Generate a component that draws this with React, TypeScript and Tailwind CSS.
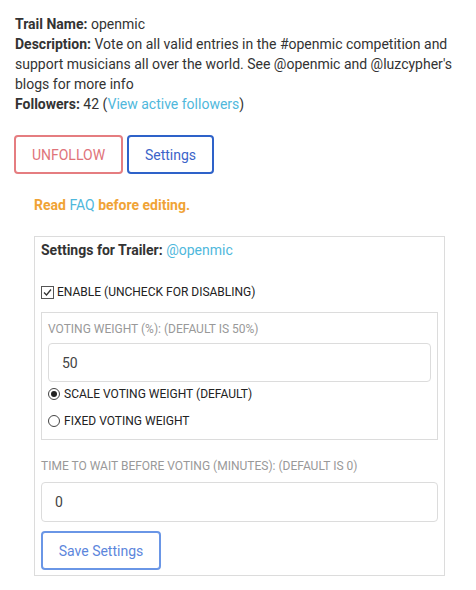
export default function App() {
  return (
    <div className="bg-white text-[#333] text-[14px] leading-[20px] pl-[15px] pr-[15px] pt-[14px] pb-4 w-[476px] h-[590px]" style={{ fontFamily: "Roboto, 'Liberation Sans', sans-serif" }}>
      <div>
        <div><b>Trail Name:</b> openmic</div>
        <div>
          <b>Description:</b> Vote on all valid entries in the #openmic competition and support musicians all over the world. See @openmic and @luzcypher's blogs for more info
        </div>
        <div>
          <b>Followers:</b> 42 (<span className="text-[#4fb8dc]">View active followers</span>)
        </div>
      </div>

      <div className="flex gap-[4px] mt-[21px] -ml-px">
        <button className="h-[39px] w-[109px] border-2 border-[#e57d80] rounded-[4px] text-[#e0737a] text-[14px] uppercase">Unfollow</button>
        <button className="h-[39px] w-[87px] border-2 border-[#2e62c9] rounded-[4px] text-[#3b64c9] text-[14px]">Settings</button>
      </div>

      <div className="pl-[19px] mt-[21px]">
        <div className="font-bold text-[#f0a336]">
          Read <span className="font-normal text-[#4fb8dc]">FAQ</span> before editing.
        </div>

        <div className="mt-[21px] w-[411px] border border-[#dcdcdc] px-[6px] pt-[3px] pb-[5px]">
          <div className="font-bold">
            Settings for Trailer: <span className="font-normal text-[#4fb8dc]">@openmic</span>
          </div>

          <div className="flex items-center mt-[22px] text-[12px] text-[#222]">
            <span className="w-[13px] h-[13px] border border-[#555] flex items-center justify-center mr-[3px]">
              <svg width="11" height="11" viewBox="0 0 11 11"><path d="M2 5.5 L4.5 8 L9 2.5" fill="none" stroke="#333" strokeWidth="1.3" /></svg>
            </span>
            ENABLE (UNCHECK FOR DISABLING)
          </div>

          <div className="mt-[10px] border border-[#dcdcdc] px-[6px] pt-[6px] pb-[8px]">
            <div className="text-[12px] text-[#999]">VOTING WEIGHT (%): (DEFAULT IS 50%)</div>
            <div className="mt-[4px] h-[39px] border border-[#dcdcdc] rounded-[4px] flex items-center pl-[13px] text-[14px] text-[#444]">50</div>
            <div className="flex items-center mt-[2px] text-[12px] text-[#222] h-[20px]">
              <span className="w-[12px] h-[12px] rounded-full border border-[#444] flex items-center justify-center mr-[4px]">
                <span className="w-[6px] h-[6px] rounded-full bg-[#222]" />
              </span>
              SCALE VOTING WEIGHT (DEFAULT)
            </div>
            <div className="flex items-center mt-[7px] text-[12px] text-[#222] h-[20px]">
              <span className="w-[12px] h-[12px] rounded-full border border-[#444] mr-[4px]" />
              FIXED VOTING WEIGHT
            </div>
          </div>

          <div className="mt-[16px] text-[12px] text-[#999]">TIME TO WAIT BEFORE VOTING (MINUTES): (DEFAULT IS 0)</div>
          <div className="mt-[6px] h-[40px] border border-[#dcdcdc] rounded-[4px] flex items-center pl-[13px] text-[14px] text-[#444]">0</div>
          <button className="mt-[9px] h-[39px] w-[120px] border-2 border-[#6a96e6] rounded-[4px] text-[#5c86dc] text-[14px]">Save Settings</button>
        </div>
      </div>
    </div>
  );
}
